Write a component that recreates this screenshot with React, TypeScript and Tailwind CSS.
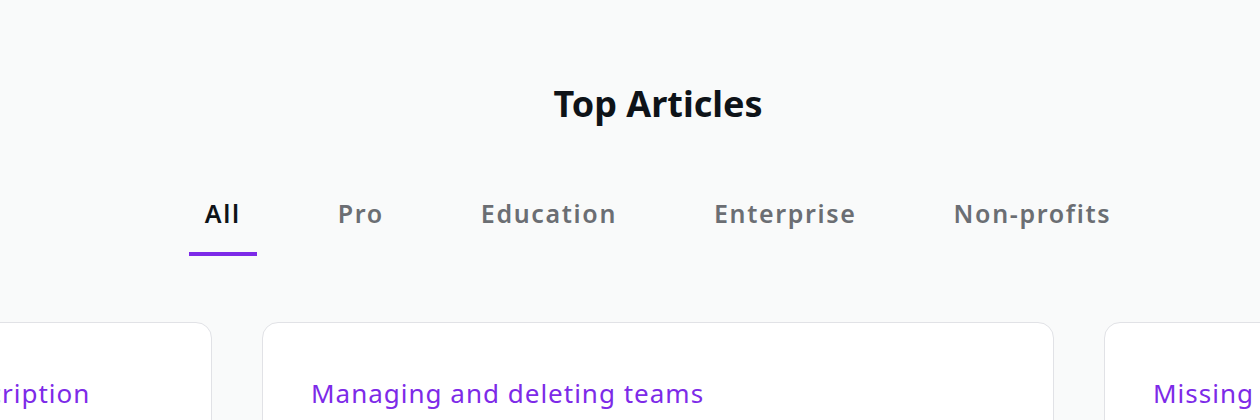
import React from "react";

const tabs = ["All", "Pro", "Education", "Enterprise", "Non-profits"];
const cards = [
  "Cancelling a Canva Pro or a Teams subscription",
  "Managing and deleting teams",
  "Missing designs and files",
];

export default function App() {
  return (
    <div
      className="min-h-screen w-full overflow-hidden bg-[#f9fafa] pl-[56px]"
      style={{ fontFamily: '"Noto Sans", "Open Sans", sans-serif' }}
    >
      <h2 className="pt-[80px] text-center text-[36px] font-bold leading-[48px] text-[#0e1318]">
        Top Articles
      </h2>
      <div className="mt-[69px] flex justify-center gap-[65px]">
        {tabs.map((t, i) => (
          <button
            key={t}
            className={
              i === 0
                ? "relative px-4 pb-[27px] text-[25px] font-semibold leading-[32px] tracking-[1.65px] text-[#0e1318]"
                : "relative px-4 pb-[27px] text-[25px] font-semibold leading-[32px] tracking-[1.65px] text-[#6b6e73]"
            }
          >
            {t}
            {i === 0 && (
              <span className="absolute bottom-0 left-0 right-0 h-[4px] bg-[#7d2ae8]" />
            )}
          </button>
        ))}
      </div>
      <div className="mt-[66px] flex justify-center gap-[50px]">
        {cards.map((c) => (
          <div
            key={c}
            className="h-[200px] w-[792px] shrink-0 rounded-2xl border border-[#e1e2e6] bg-white pl-[48px] pr-[40px] pt-[54px]"
          >
            <span className="whitespace-nowrap text-[26px] leading-[32px] tracking-[1px] text-[#7d2ae8]">
              {c}
            </span>
          </div>
        ))}
      </div>
    </div>
  );
}
